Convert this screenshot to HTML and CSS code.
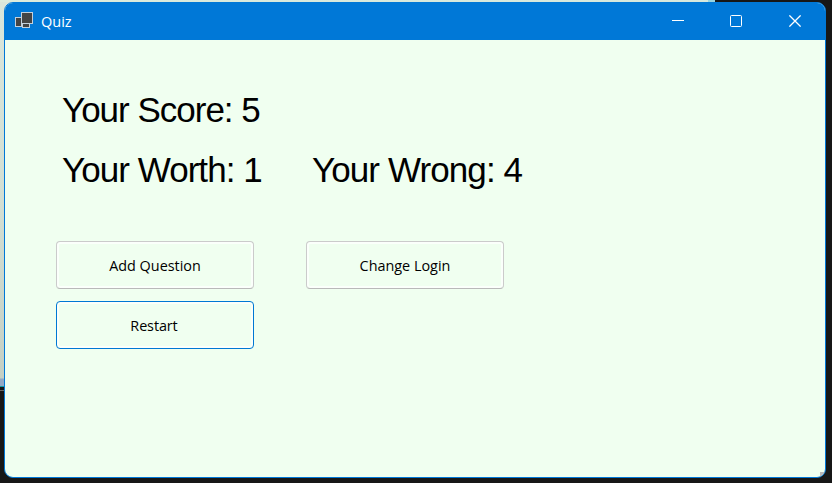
FILE: index.html
```html
<!DOCTYPE html>
<html lang="en">
<head>
<meta charset="utf-8">
<title>Quiz</title>
<link rel="stylesheet" href="styles.css">
</head>
<body>
<main class="window">
  <header class="titlebar">
    <svg class="app-icon" width="18" height="17" viewBox="0 0 18 17">
      <g fill="#444" stroke="#c3d0dc">
        <rect x=".5" y="5.5" width="6" height="9"/>
        <rect x="7.5" y="10.5" width="7" height="5"/>
        <rect x="6.5" y=".5" width="11" height="11"/>
      </g>
    </svg>
    <span class="title">Quiz</span>
    <div class="controls">
      <svg width="12" height="12" viewBox="0 0 12 12"><path d="M0 5.5h12"/></svg>
      <svg width="12" height="12" viewBox="0 0 12 12"><rect x=".5" y=".5" width="11" height="11" rx="1"/></svg>
      <svg width="12" height="12" viewBox="0 0 12 12"><path stroke-width="1.3" d="M.4.4l11.2 11.2M11.6.4L.4 11.6"/></svg>
    </div>
  </header>
  <section class="form">
    <div class="row">
      <span class="label score">Your Score: 5</span>
    </div>
    <div class="row">
      <span class="label worth">Your Worth: 1</span>
      <span class="label wrong">Your Wrong: 4</span>
    </div>
    <div class="row first">
      <button class="button">Add Question</button>
      <button class="button">Change Login</button>
    </div>
    <div class="row">
      <button class="button focused">Restart</button>
    </div>
  </section>
  <span class="grip"></span>
</main>
</body>
</html>
```
FILE: styles.css
```css
* { box-sizing: border-box; }
body {
  margin: 0;
  height: 483px;
  padding: 2px 0 0 4px;
  overflow: hidden;
  background:
    linear-gradient(#98d4e0, #98d4e0) 708px 0 / 7px 2px no-repeat,
    linear-gradient(90deg, #dcebdc, #d7e8dd) 0 0 / 708px 2px no-repeat,
    linear-gradient(#686868, #686868) 0 390px / 5px 1px no-repeat,
    linear-gradient(#d9e6db 0, #d3dfd3 200px, #c5d0c4 378px, #92a9c5 379px, #92a9c5 386px, #159ba9 386px) 0 0 / 14px 387px no-repeat,
    #171717;
}
.window {
  position: relative;
  width: 822px;
  height: 476px;
  border: 1px solid #0078d7;
  border-radius: 9px;
  overflow: hidden;
  background: #f0fff0;
}
.titlebar {
  display: flex;
  align-items: center;
  height: 37px;
  padding-left: 10px;
  background: #0078d7;
  color: #fff;
}
.app-icon { margin-top: -2px; }
.title {
  margin-left: 8px;
  font: 14.5px/20px "Open Sans", sans-serif;
}
.controls {
  display: flex;
  gap: 46px;
  margin: -1px 25px 0 auto;
}
.controls svg {
  fill: none;
  stroke: #fff;
}
.controls svg:last-child { margin-left: 1px; margin-right: -1px; }
.form { padding: 40px 0 0 51px; }
.row {
  display: grid;
  grid-template-columns: 250px 250px;
  height: 60px;
}
.label {
  padding-left: 6px;
  font: 35px/60px "Liberation Sans", Arial, sans-serif;
  white-space: nowrap;
  color: #000;
}
.score { letter-spacing: -1px; }
.worth { letter-spacing: -0.95px; }
.wrong { letter-spacing: -0.9px; }
.first { margin-top: 41px; }
.button {
  width: 198px;
  height: 48px;
  padding: 2px 0 0;
  border: 1px solid #cbcbcb;
  border-bottom-color: #b9b9b9;
  border-radius: 4px;
  background: #f0fff0;
  box-shadow: inset 0 0 0 2px #fbfffb;
  font: 14.4px/20px "Open Sans", sans-serif;
  color: #000;
}
.focused {
  border-color: #0078d4;
  padding-right: 2px;
  letter-spacing: -0.1px;
}
.grip {
  position: absolute;
  right: 0;
  bottom: 0;
  width: 5px;
  height: 5px;
  background: #b8b8b8;
}
```
